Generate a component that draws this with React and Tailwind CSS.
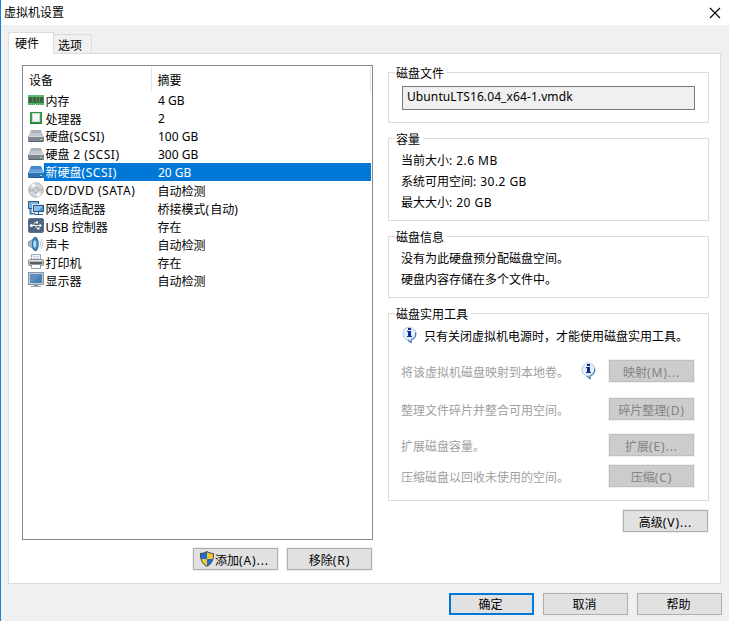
import React, { useState } from 'react';

const MemoryIcon = () => (
  <svg width="16" height="16" viewBox="0 0 16 16">
    <rect x="0" y="3" width="16" height="9" fill="#38a147" />
    <rect x="0" y="3" width="16" height="2" fill="#62bb6a" />
    <rect x="1" y="5" width="3" height="5" fill="#4a574c" />
    <rect x="5" y="5" width="3" height="5" fill="#4a574c" />
    <rect x="9" y="5" width="2" height="5" fill="#4a574c" />
    <rect x="12" y="5" width="3" height="5" fill="#4a574c" />
    <rect x="0" y="10" width="16" height="1" fill="#238537" />
    <rect x="0" y="11" width="7" height="2" fill="#4aa955" />
    <rect x="8" y="11" width="8" height="2" fill="#4aa955" />
    <path d="M1 12h6M9 12h6" stroke="#b9d89b" strokeDasharray="1 1" />
  </svg>
);

const CpuIcon = () => (
  <svg width="16" height="16" viewBox="0 0 16 16">
    <rect x="2.500" y="2.500" width="11" height="11" fill="#3aa24c" stroke="#2a9540" />
    <rect x="4" y="3" width="8" height="9" fill="#cfd4d2" />
    <rect x="5" y="4" width="6" height="7" fill="#f5f6f6" />
    <path d="M2 13.500h12" stroke="#16702a" />
  </svg>
);

const DiskIcon = ({ selected }) => (
  <svg width="16" height="16" viewBox="0 0 16 16">
    <path d="M3 2h10l3 7.500H0z" fill={selected ? '#5f9fda' : '#c3c8d0'} />
    <path d="M3.500 2h9l1 3H2.300z" fill={selected ? '#4288c9' : '#adb3bd'} />
    <rect x="0" y="8" width="16" height="6" rx="1" fill={selected ? '#2d72b5' : '#7f8794'} />
    <path d="M0.500 8.500h15" stroke={selected ? '#84b8e6' : '#d4d8de'} />
    <path d="M1 13.500h14" stroke={selected ? '#1d588f' : '#59616d'} />
    <rect x="12" y="11" width="2" height="1" fill={selected ? '#8fe0b0' : '#a3e34b'} />
  </svg>
);

const DiscIcon = () => (
  <svg width="16" height="16" viewBox="0 0 16 16">
    <circle cx="8" cy="8" r="7.300" fill="#d3d6da" stroke="#a2a6ab" strokeWidth="0.8" />
    <path d="M8 8L2.500 3.500A7 7 0 0 1 7 1zM8 8l5.500 4.500A7 7 0 0 1 9 15z" fill="#f4f5f7" />
    <path d="M8 8l6.800-2A7 7 0 0 1 15 9zM8 8L1.200 10A7 7 0 0 1 1 7z" fill="#b9bdc3" />
    <circle cx="8" cy="8" r="2.600" fill="#e9ebee" stroke="#979ca3" strokeWidth="0.8" />
    <circle cx="8" cy="8" r="1.100" fill="#fff" stroke="#8d9299" strokeWidth="0.6" />
  </svg>
);

const NetworkIcon = () => (
  <svg width="16" height="16" viewBox="0 0 16 16">
    <rect x="0.500" y="1.500" width="10" height="7" fill="#78b2e0" stroke="#35597c" />
    <path d="M2.500 9v4.500h5" fill="none" stroke="#3a7db8" strokeWidth="2" />
    <rect x="4.500" y="4.500" width="11" height="8" fill="#fff" stroke="#dce6ee" />
    <rect x="5.500" y="5.500" width="10" height="6" fill="#4a92d2" stroke="#2d5680" />
    <path d="M6 6h9l-5 5H6z" fill="#89c0ec" />
    <path d="M10.500 12v2M7 14.500h8" fill="none" stroke="#355a7e" />
  </svg>
);

const UsbIcon = () => (
  <svg width="16" height="16" viewBox="0 0 16 16">
    <rect x="0.500" y="0.500" width="15" height="14" rx="1.500" fill="#4d6580" stroke="#5b738c" />
    <path d="M3 7.500h9M5 7.500l2-3h2M7 7.500l2 3h2" fill="none" stroke="#e3e9ef" />
    <circle cx="3.300" cy="7.500" r="1.500" fill="#fff" />
    <path d="M11.500 5.500l2.500 2-2.500 2z" fill="#fff" />
    <rect x="8" y="3.500" width="2" height="2" fill="#fff" />
    <rect x="9.500" y="9.500" width="2" height="2" fill="#fff" />
  </svg>
);

const SoundIcon = () => (
  <svg width="16" height="16" viewBox="0 0 16 16">
    <path d="M0.500 5.500L3 4.700 7 1l2.500 2v9.500L8 15l-5-4-2.500-1.500z" fill="#a3b6c8" stroke="#6d879f" strokeWidth="0.8" />
    <ellipse cx="7.300" cy="8" rx="3" ry="6.700" fill="#3d86c6" stroke="#2f5c88" strokeWidth="0.8" />
    <ellipse cx="6.800" cy="8" rx="1.600" ry="3.800" fill="#a6dbf7" />
    <path d="M11.800 4.700q1.600 3.300 0 6.600M13.500 3.200q2.500 4.800 0 9.600" fill="none" stroke="#b3c1ce" strokeWidth="0.9" />
  </svg>
);

const PrinterIcon = () => (
  <svg width="16" height="16" viewBox="0 0 16 16">
    <rect x="3.500" y="0.500" width="9" height="6" fill="#eef3fb" stroke="#a1acbb" />
    <path d="M5 2.500h6M5 4.500h6" stroke="#c9d5e6" />
    <rect x="0.500" y="5.500" width="15" height="6" rx="1" fill="#b4b7bc" stroke="#8b8f95" />
    <path d="M1 6.500h14" stroke="#dfe1e4" />
    <rect x="2" y="8" width="12" height="2" fill="#5a5e64" />
    <path d="M3.500 10.500h9v4h-9z" fill="#fafbfd" stroke="#929aa5" />
  </svg>
);

const DisplayIcon = () => (
  <svg width="16" height="16" viewBox="0 0 16 16">
    <rect x="0.500" y="0.500" width="15" height="12" fill="#c4cfda" stroke="#8796a5" />
    <rect x="2" y="2" width="12" height="9" fill="#4b80b4" />
    <path d="M2 2h12L4 11H2z" fill="#5e8fbf" />
    <rect x="6" y="13" width="4" height="1" fill="#8f9dab" />
    <path d="M3 14.500h10" stroke="#8f9dab" />
  </svg>
);

const InfoIcon = () => (
  <svg width="16" height="18" viewBox="0 0 16 18" className="shrink-0">
    <path d="M8 1a7 6.700 0 0 1 2.500 13L10 16.500l-3.500-2.600A7 6.700 0 0 1 8 1z" fill="#e2eefa" stroke="#b4cbe2" />
    <path d="M14.500 6.500a7 6.700 0 0 1-4.200 7.300L10 16.500l-3.200-2.500" fill="none" stroke="#4a7fb5" strokeWidth="1.200" />
    <rect x="7" y="2" width="3" height="2" fill="#0b2f91" />
    <path d="M6 5h4v5h1v1H6v-1h1V6H6z" fill="#0b2f91" />
  </svg>
);

const ShieldIcon = () => (
  <svg width="16" height="16" viewBox="0 0 16 16" className="shrink-0">
    <path d="M8 0Q5 2 1 2C0.500 8 2.500 13 8 15.800 13.500 13 15.500 8 15 2 11 2 8 0 8 0z" fill="#49525c" />
    <path d="M8 1.300Q5 3 2 3.100 1.900 6 2.500 8H8z" fill="#1a70cf" />
    <path d="M8 1.300Q11 3 14 3.100 14.100 6 13.500 8H8z" fill="#fcc32e" />
    <path d="M8 8H2.500q1 4.500 5.500 6.700z" fill="#fcc32e" />
    <path d="M8 8h5.500q-1 4.500-5.500 6.700z" fill="#1a70cf" />
  </svg>
);

const devices = [
  { name: '内存', summary: '4 GB', icon: MemoryIcon },
  { name: '处理器', summary: '2', icon: CpuIcon },
  { name: '硬盘(SCSI)', summary: '100 GB', icon: DiskIcon },
  { name: '硬盘 2 (SCSI)', summary: '300 GB', icon: DiskIcon },
  { name: '新硬盘(SCSI)', summary: '20 GB', icon: DiskIcon },
  { name: 'CD/DVD (SATA)', summary: '自动检测', icon: DiscIcon },
  { name: '网络适配器', summary: '桥接模式(自动)', icon: NetworkIcon },
  { name: 'USB 控制器', summary: '存在', icon: UsbIcon },
  { name: '声卡', summary: '自动检测', icon: SoundIcon },
  { name: '打印机', summary: '存在', icon: PrinterIcon },
  { name: '显示器', summary: '自动检测', icon: DisplayIcon },
];

// Latin runs are spaced a little wider than the Chinese around them
const Label = ({ text, tracking = 'tracking-[0.55px]' }) => (
  <span className="whitespace-pre">
    {text.split(/([ -~]+)/).map((run, i) => (
      i % 2 ? <span key={i} className={tracking}>{run}</span> : run
    ))}
  </span>
);

// Push button with the pale outer edge used inside the tab page
const Button = ({ text, icon, disabled }) => (
  <button
    disabled={disabled}
    className={`w-[87px] h-6 shrink-0 border border-[#f0f0f0] ${disabled ? 'text-[#838383]' : 'text-black'}`}
  >
    <span
      className={`flex h-full items-center justify-center border ${icon ? 'pr-[3px]' : ''} ${
        disabled ? 'bg-[#cccccc] border-[#bfbfbf]' : 'bg-[#e1e1e1] border-[#adadad]'
      }`}
    >
      {icon}
      <span className="pt-[3px]"><Label text={text} tracking="tracking-[0.9px]" /></span>
    </span>
  </button>
);

const Group = ({ title, className, children }) => (
  <fieldset className={`border border-[#dcdcdc] min-w-0 ${className}`}>
    <legend className="ml-1.5 pl-px pr-[3px] h-[15px] leading-[17px]">{title}</legend>
    {children}
  </fieldset>
);

const ToolRow = ({ text, label, info, className }) => (
  <div className={`flex items-center h-6 pl-3 pr-[13px] text-[#a0a0a0] ${className}`}>
    <span className="flex-1 pt-[3px] whitespace-nowrap">{text}</span>
    {info && <span className="mr-3"><InfoIcon /></span>}
    <Button text={label} disabled />
  </div>
);

const App = () => {
  const [selected, setSelected] = useState(4);

  return (
    <div className="w-[729px] h-[621px] flex flex-col overflow-hidden bg-[#f0f0f0] border-l border-[#1883d7] text-black text-[12px] leading-[18px] font-['Noto_Sans','Noto_Sans_CJK_SC',sans-serif]">
      {/* Title bar */}
      <div className="h-[25px] shrink-0 bg-white flex items-center justify-between pl-[3px] pr-2">
        <span>虚拟机设置</span>
        <svg width="12" height="12" viewBox="0 0 12 12">
          <path d="M1 1l10 10M11 1l-10 10" stroke="#000" strokeWidth="1.100" />
        </svg>
      </div>

      {/* Tabs */}
      <div className="flex items-end h-[29px] shrink-0 pl-[7px] -mb-px relative">
        <div className="w-[46px] h-[22px] pl-1.5 pt-0.5 bg-white border border-b-0 border-[#dcdcdc]">硬件</div>
        <div className="w-[38px] h-5 pl-1 pt-0.5 bg-[#f0f0f0] border border-l-0 border-[#dcdcdc]">选项</div>
      </div>

      {/* Tab page */}
      <div className="ml-[7px] w-[713px] h-[531px] shrink-0 bg-white border border-[#dcdcdc] flex gap-[15px] pl-[13px] pt-[11px]">
        <div className="w-[351px] shrink-0">
          <div className="h-[475px] border border-[#828790]">
            <div className="flex h-[25px] pt-px pr-px">
              <div className="w-[129px] pl-1.5 pt-[5px] border-r border-[#e5e5e5]">设备</div>
              <div className="flex-1 pl-[5.5px] pt-[5px] border-r border-[#e5e5e5]">摘要</div>
            </div>
            {devices.map((device, i) => {
              const Icon = device.icon;
              const active = selected === i;
              return (
                <div key={device.name} onClick={() => setSelected(i)} className="flex h-[18px] pl-[5px] pr-px whitespace-nowrap cursor-default">
                  <span className="w-4 pt-px shrink-0"><Icon selected={active} /></span>
                  <div className={`flex flex-1 ${active ? 'bg-[#0078d7] text-white' : ''}`}>
                    <span className={`w-[113px] pl-[1.5px] ${/\(/.test(device.name) ? 'pt-px' : 'pt-0.5'}`}>
                      <Label
                        text={device.name}
                        tracking={/USB/.test(device.name) ? '' : undefined}
                      />
                    </span>
                    <span className={/[0-9]/.test(device.summary) ? 'pl-px pt-px' : 'pl-[0.5px] pt-0.5'}>
                      <Label text={device.summary} tracking={/[0-9]/.test(device.summary) ? '' : 'tracking-[1px]'} />
                    </span>
                  </div>
                </div>
              );
            })}
          </div>
          <div className="flex justify-end gap-[7px] pt-[7px]">
            <Button icon={<ShieldIcon />} text="添加(A)..." />
            <Button text="移除(R)" />
          </div>
        </div>

        <div className="w-[321px] shrink-0 flex flex-col gap-2">
          <Group title="磁盘文件" className="h-[58px]">
            <div className="mt-1.5 ml-[13px] w-[293px] h-6 pl-1 leading-5 bg-[#f0f0f0] border border-[#7a7a7a] tracking-[0.1px]">
              UbuntuLTS16.04_x64-1.vmdk
            </div>
          </Group>

          <Group title="容量" className="h-[90px]">
            <div className="mt-1 pl-3 leading-[21px]">
              <p><Label text="当前大小: 2.6 MB" tracking="tracking-[0.45px]" /></p>
              <p><Label text="系统可用空间: 30.2 GB" tracking="tracking-[0.45px]" /></p>
              <p><Label text="最大大小: 20 GB" tracking="tracking-[0.45px]" /></p>
            </div>
          </Group>

          <Group title="磁盘信息" className="h-[69px]">
            <div className="mt-1 pl-3 leading-[21px]">
              <p>没有为此硬盘预分配磁盘空间。</p>
              <p>硬盘内容存储在多个文件中。</p>
            </div>
          </Group>

          <Group title="磁盘实用工具" className="h-[195px]">
            <div className="flex items-center h-7 pl-3 gap-[7px] whitespace-nowrap">
              <InfoIcon />
              <span className="pt-[3px]">只有关闭虚拟机电源时，才能使用磁盘实用工具。</span>
            </div>
            <ToolRow className="mt-2.5" text="将该虚拟机磁盘映射到本地卷。" label="映射(M)..." info />
            <ToolRow className="mt-3.5" text="整理文件碎片并整合可用空间。" label="碎片整理(D)" />
            <ToolRow className="mt-3" text="扩展磁盘容量。" label="扩展(E)..." />
            <ToolRow className="mt-[7px]" text="压缩磁盘以回收未使用的空间。" label="压缩(C)" />
          </Group>

          <div className="flex justify-end">
            <Button text="高级(V)..." />
          </div>
        </div>
      </div>

      {/* Dialog buttons */}
      <div className="flex justify-end gap-[9px] pt-[9px] pr-[7px]">
        <button className="w-[85px] h-[22px] pt-px pr-0.5 bg-[#e1e1e1] border-2 border-[#0078d7] leading-[17px]">确定</button>
        <button className="w-[85px] h-[22px] pt-px pr-0.5 bg-[#e1e1e1] border border-[#adadad]">取消</button>
        <button className="w-[85px] h-[22px] pt-px pr-0.5 bg-[#e1e1e1] border border-[#adadad]">帮助</button>
      </div>
    </div>
  );
};

export default App;
